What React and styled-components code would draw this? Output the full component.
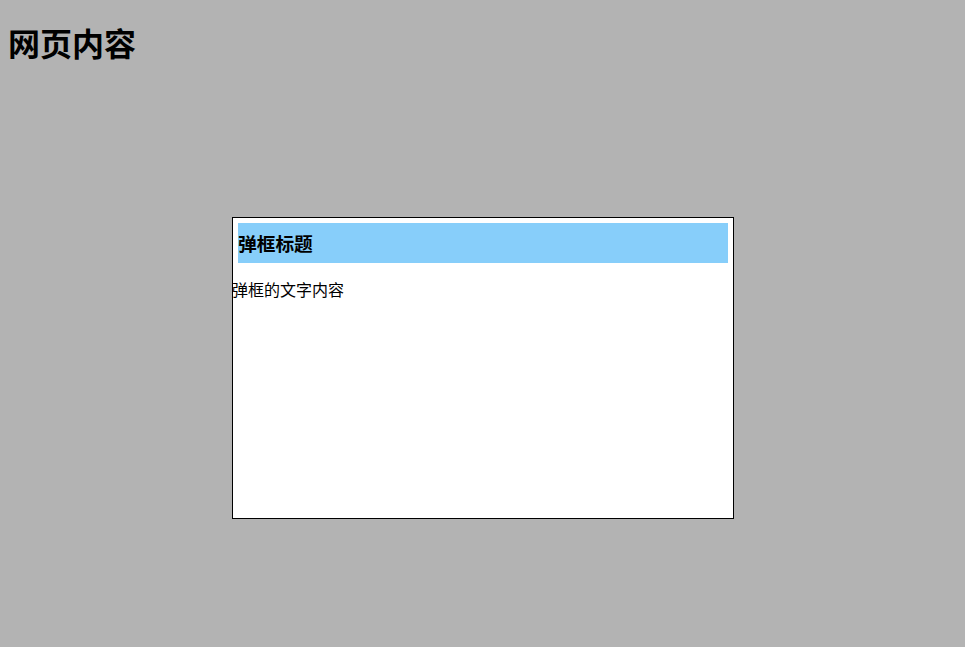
import React from 'react';
import styled, { createGlobalStyle } from 'styled-components';

// # GLOBAL
const GlobalStyle = createGlobalStyle`
    html, body {
        margin: 0;
        padding: 0;
        background: #b3b3b3;
    }
    body {
        padding: 8px;
        font-family: "Noto Sans CJK SC", "Noto Sans", sans-serif;
        color: #000;
    }
`;

// # STYLED
const PageTitle = styled.h1`
    margin: 0;
    padding-top: 18px;
    font-size: 32px;
    font-weight: bold;
    line-height: 32px;
`;
const Overlay = styled.div`
    position: fixed;
    inset: 0;
    display: flex;
    justify-content: center;
    align-items: flex-start;
    padding-top: 217px;
    padding-left: 1px;
`;
const Dialog = styled.div`
    box-sizing: border-box;
    width: 502px;
    height: 302px;
    padding: 5px;
    background: #fff;
    border: 1px solid #000;
`;
const DialogHeader = styled.div`
    box-sizing: border-box;
    height: 40px;
    padding-bottom: 2px;
    background: #87cefa;
    display: flex;
    align-items: center;
`;
const DialogTitle = styled.h3`
    margin: 0;
    font-size: 18.72px;
    font-weight: bold;
`;
const DialogText = styled.p`
    margin: 15px 0 0 -6px;
    font-size: 16px;
    line-height: 23px;
`;

// # COMPONENT
export default function App() {
    return (
        <>
            <GlobalStyle />
            <PageTitle>网页内容</PageTitle>
            <Overlay>
                <Dialog>
                    <DialogHeader>
                        <DialogTitle>弹框标题</DialogTitle>
                    </DialogHeader>
                    <DialogText>弹框的文字内容</DialogText>
                </Dialog>
            </Overlay>
        </>
    );
}
